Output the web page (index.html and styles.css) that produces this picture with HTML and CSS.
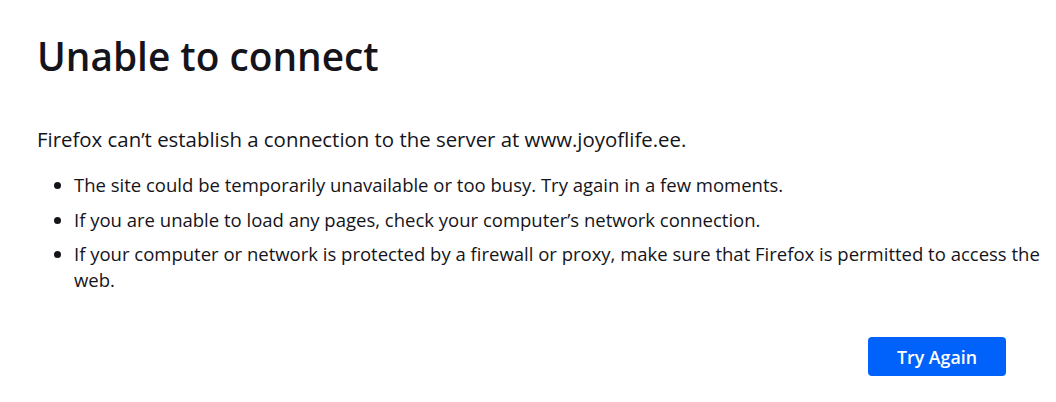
FILE: index.html
```html
<!DOCTYPE html>
<html lang="en">
<head>
<meta charset="utf-8">
<title>Problem loading page</title>
<link rel="stylesheet" href="styles.css">
</head>
<body>
<main class="container">
  <h1 class="title">Unable to connect</h1>
  <p class="intro">Firefox can’t establish a connection to the server at www.joyoflife.ee.</p>
  <ul class="reasons">
    <li>The site could be temporarily unavailable or too busy. Try again in a few moments.</li>
    <li>If you are unable to load any pages, check your computer’s network connection.</li>
    <li>If your computer or network is protected by a firewall or proxy, make sure that Firefox is permitted to access the web.</li>
  </ul>
  <div class="actions">
    <button class="primary">Try Again</button>
  </div>
</main>
</body>
</html>
```
FILE: styles.css
```css
html, body {
  margin: 0;
  background: #ffffff;
  color: #15141a;
  font-family: "Open Sans", "Noto Sans", sans-serif;
}
.container {
  padding: 30px 50px 0 37px;
  box-sizing: border-box;
  width: 1056px;
}
.title {
  margin: 0;
  font-size: 38.8px;
  font-weight: 600;
  line-height: 52px;
}
.intro {
  margin: 43px 0 0;
  font-size: 20.4px;
  line-height: 28px;
}
.reasons {
  margin: 19px -40px 0 0;
  padding-left: 37px;
  font-size: 18.5px;
  line-height: 26px;
}
.reasons li {
  margin-bottom: 8.6px;
}
.actions {
  display: flex;
  justify-content: flex-end;
  margin-top: 44px;
}
.primary {
  width: 138px;
  height: 39px;
  border: none;
  border-radius: 4px;
  background: #0062fa;
  color: #ffffff;
  font-family: inherit;
  font-size: 17.8px;
  font-weight: 600;
}
```
